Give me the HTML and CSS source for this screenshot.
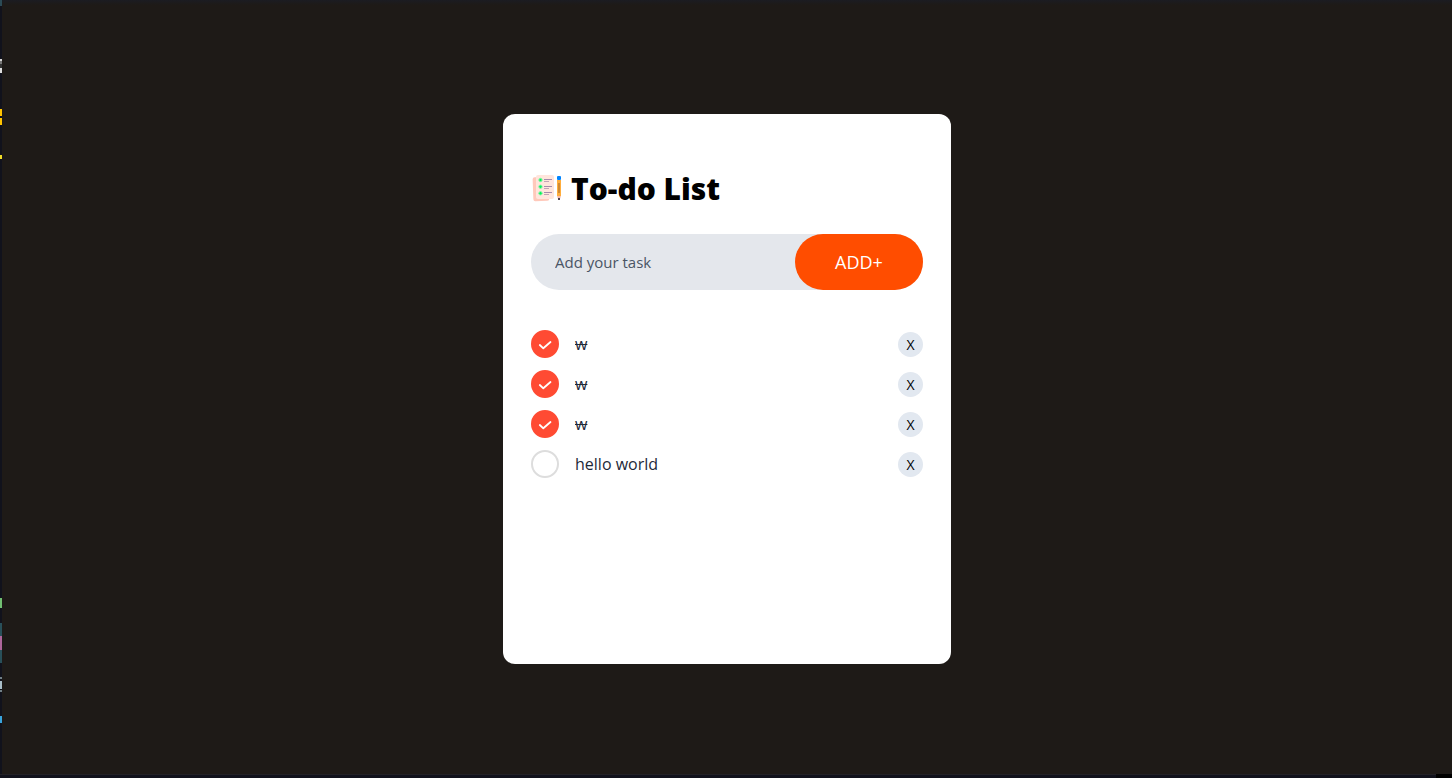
FILE: index.html
```html
<!DOCTYPE html>
<html lang="en">
<head>
<meta charset="utf-8">
<meta name="viewport" content="width=device-width, initial-scale=1">
<title>To-do List</title>
<link rel="stylesheet" href="styles.css">
</head>
<body>
<main class="page">
  <section class="card">
    <header class="header">
      <svg class="logo" viewBox="0 0 32 32" aria-hidden="true">
        <rect x="2" y="5" width="16" height="24" rx="2" fill="#ffc9bb" transform="rotate(-2 10 17)"/>
        <rect x="5" y="3" width="18" height="24" rx="2" fill="#ffe5dc"/>
        <g fill="#00f35a" stroke="#8df5a5" stroke-width="1"><circle cx="9.500" cy="8" r="1.700"/><circle cx="9.500" cy="14.700" r="1.700"/><circle cx="9.500" cy="21.300" r="1.700"/></g>
        <g stroke="#a58bab" stroke-width="1"><path d="M13 7.500h8M13 14.500h8M13 20.500h8"/><path stroke="#c3a3b5" d="M13 9.500h5M13 16.500h5M13 22.500h5"/></g>
        <rect x="26" y="4" width="4" height="4" rx="1" fill="#0084ff"/>
        <path d="M26 8h4v16h-4z" fill="#ffad3c"/>
        <path d="M28 11v10" stroke="#b5782f" stroke-width="1.300"/>
        <path d="M26 24h4l-1 3h-2z" fill="#f7bcae"/>
        <path d="M27 26h2v2h-2z" fill="#4d4351"/>
      </svg>
      <h1 class="title">To-do List</h1>
    </header>
    <form class="form">
      <input class="field" type="text" placeholder="Add your task" aria-label="Add your task">
      <button class="add" type="button">ADD+</button>
    </form>
    <ul class="list">
      <li class="item">
        <label class="task"><input class="check" type="checkbox" checked><svg class="tick" viewBox="0 0 28 28" aria-hidden="true"><path d="M8.800 15l3.500 3.300 7.200-6.300"/></svg><span class="text">w</span></label>
        <button class="remove" type="button">X</button>
      </li>
      <li class="item">
        <label class="task"><input class="check" type="checkbox" checked><svg class="tick" viewBox="0 0 28 28" aria-hidden="true"><path d="M8.800 15l3.500 3.300 7.200-6.300"/></svg><span class="text">w</span></label>
        <button class="remove" type="button">X</button>
      </li>
      <li class="item">
        <label class="task"><input class="check" type="checkbox" checked><svg class="tick" viewBox="0 0 28 28" aria-hidden="true"><path d="M8.800 15l3.500 3.300 7.200-6.300"/></svg><span class="text">w</span></label>
        <button class="remove" type="button">X</button>
      </li>
      <li class="item">
        <label class="task"><input class="check" type="checkbox"><svg class="tick" viewBox="0 0 28 28" aria-hidden="true"><path d="M8.800 15l3.500 3.300 7.200-6.300"/></svg><span class="text">hello world</span></label>
        <button class="remove" type="button">X</button>
      </li>
    </ul>
  </section>
</main>
</body>
</html>
```
FILE: styles.css
```css
* { box-sizing: border-box; margin: 0; padding: 0; }

body { font-family: "Open Sans", "Noto Sans", sans-serif; }

.page {
  display: grid;
  min-height: 100vh;
  place-items: center;
  padding: 0 0 0 2px;
  background:
    linear-gradient(#000, #000) right bottom / 16px 4px no-repeat,
    linear-gradient(#11121c, #11121c) left bottom / 100% 3px no-repeat,
    linear-gradient(#232126, #232126) left bottom / 100% 4px no-repeat,
    linear-gradient(
      #2b4a55 0 6px, #11121c 6px 59px, #d5d5d5 59px 61px, #777 61px 64px,
      #333 64px 68px, #ddd 68px 73px, #11121c 73px 109px, #ffc400 109px 116px,
      #11121c 116px 118px, #ffc400 118px 125px, #11121c 125px 155px,
      #f0dc28 155px 159px, #11121c 159px 598px, #71bf72 598px 608px,
      #11121c 608px 623px, #29505a 623px 636px, #ad669b 636px 650px,
      #29505a 650px 663px, #11121c 663px 677px, #718087 677px 679px,
      #11121c 679px 681px, #a9bec9 681px 689px, #11121c 689px 690px,
      #718087 690px 692px, #11121c 692px 716px, #39a4dc 716px 723px,
      #11121c 723px
    ) left top / 2px 100% no-repeat,
    linear-gradient(#1b1c22, #1e1a17) left top / 100% 5px no-repeat,
    #1e1a17;
}

.card {
  width: 100%;
  max-width: 448px;
  min-height: 550px;
  padding: 56px 28px 28px;
  border-radius: 12px;
  background: #fff;
}

.header {
  display: flex;
  align-items: center;
  gap: 8px;
  margin: 0 0 26px;
}

.logo { width: 32px; height: 32px; margin-bottom: 2px; }

.title { font-size: 30px; font-weight: 800; line-height: 38px; color: #000; }

.form {
  display: flex;
  margin-bottom: 34px;
  border-radius: 28px;
  background: #e4e7ec;
}

.field {
  flex: 1;
  min-width: 0;
  height: 56px;
  padding: 0 8px 0 24px;
  border: 0;
  outline: 0;
  background: none;
  font: 400 15px "Open Sans", sans-serif;
  color: #1e2939;
}

.field::placeholder { color: #4a5565; opacity: 1; }

.add {
  width: 128px;
  height: 56px;
  border: 0;
  border-radius: 28px;
  background: #ff4d00;
  font: 400 18px "Open Sans", sans-serif;
  color: #fff;
}

.list { list-style: none; }

.item { display: flex; align-items: center; height: 40px; }

.task { display: flex; flex: 1; align-items: center; }

.check {
  appearance: none;
  width: 28px;
  height: 28px;
  border: 2px solid #ddd;
  border-radius: 50%;
  background: #fff;
}

.check:checked { border-color: #ff4b33; background: #ff4b33; }

.tick {
  width: 28px;
  height: 28px;
  margin-left: -28px;
  fill: none;
  stroke: #fff;
  stroke-width: 1.8;
  stroke-linecap: round;
  stroke-linejoin: round;
  visibility: hidden;
  pointer-events: none;
  position: relative;
}

.check:checked + .tick { visibility: visible; }

.text { margin-left: 16px; font-size: 16px; line-height: 24px; color: #1e2939; }

.check:checked ~ .text { text-decoration: line-through; }

.remove {
  width: 25px;
  height: 25px;
  border: 0;
  border-radius: 50%;
  background: #e2e8f0;
  font: 400 14px "Open Sans", sans-serif;
  color: #000;
}
```
